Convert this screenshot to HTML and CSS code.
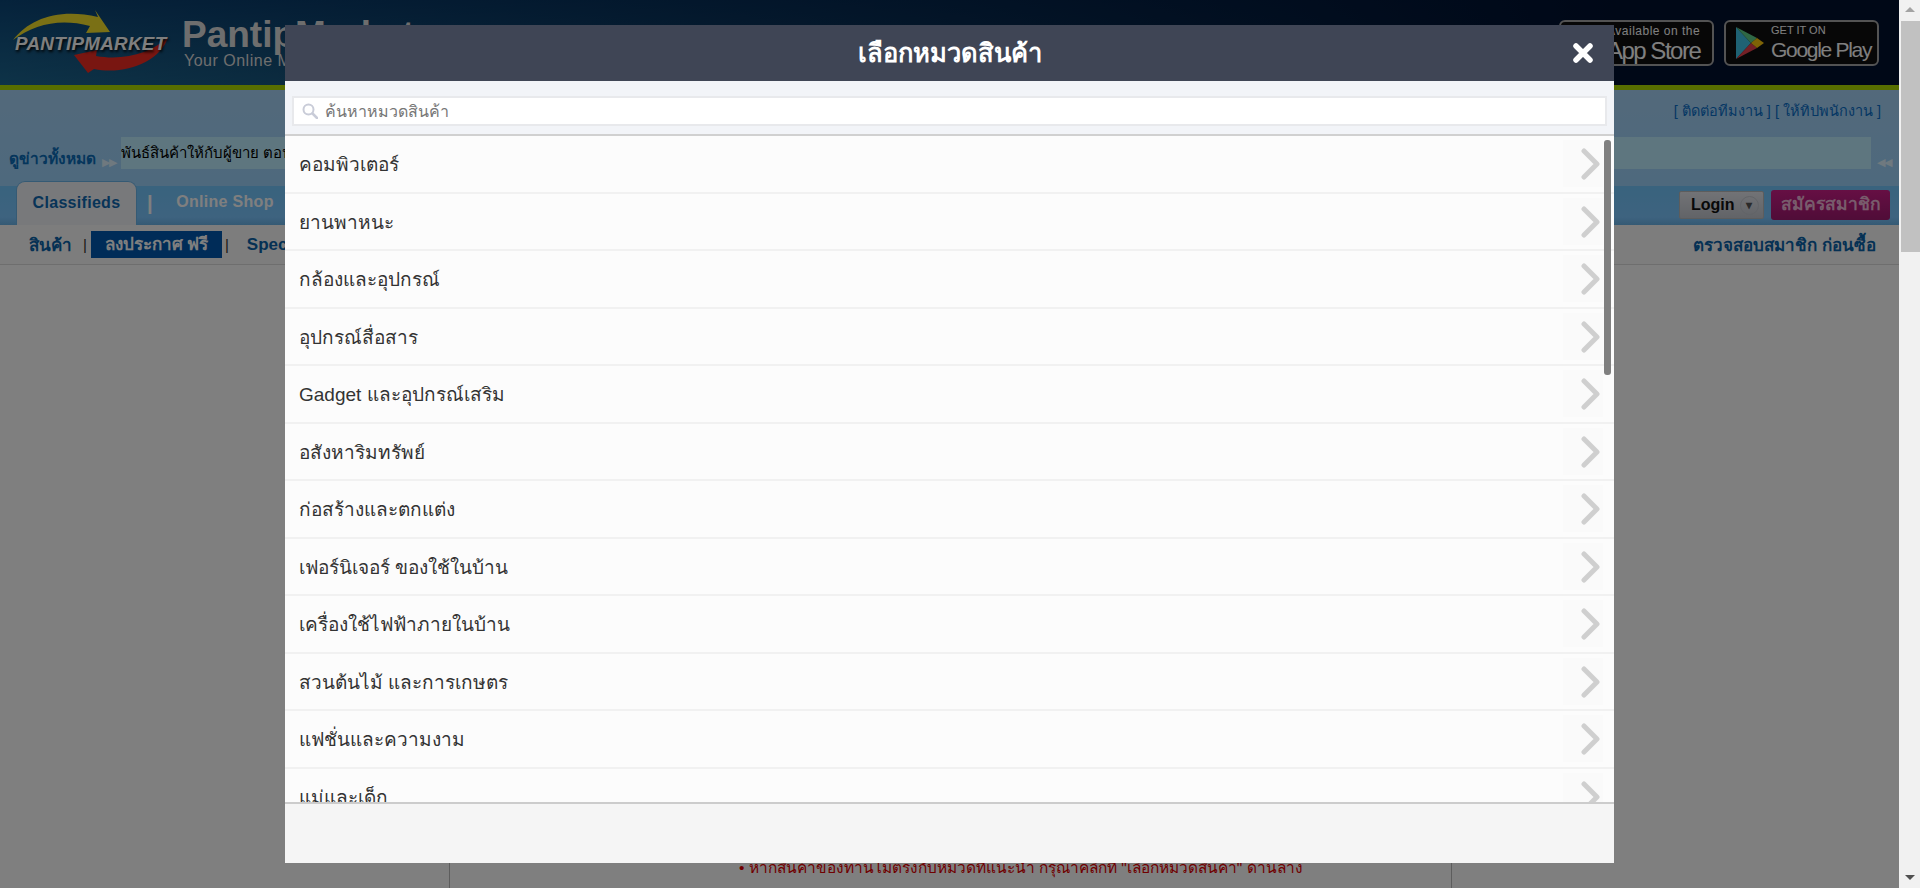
FILE: index.html
```html
<!DOCTYPE html>
<html lang="th">

<head>
    <meta charset="UTF-8">
    <meta name="viewport" content="width=device-width, initial-scale=1.0">
    <title>PantipMarket - เลือกหมวดสินค้า</title>
    <link rel="stylesheet" href="styles.css">
</head>

<body>

    <svg class="defs" width="0" height="0">
        <symbol id="chevron" viewBox="0 0 20 32">
            <path d="M3 3 L16 16 L3 29" fill="none" stroke="#cfcfcf" stroke-width="5" stroke-linecap="round" stroke-linejoin="round" />
        </symbol>
    </svg>

    <div class="page">
        <header class="top">
            <a class="logo">
                <svg class="logo-arrows" width="160" height="68" viewBox="0 0 160 68">
                    <path d="M1 31 C18 9 48 -1 86 8 L83 1 L98 23 L74 24 L78 17 C48 9 23 15 1 31 Z" fill="#f5e02a" />
                    <path d="M156 28 C148 54 112 66 82 60 L76 64 L62 46 L85 41 L84 47 C112 52 140 44 156 28 Z" fill="#f22c22" />
                </svg>
                <span class="logo-name">PANTIPMARKET</span>
            </a>
            <div class="brand">
                <div class="brand-name">PantipMarket</div>
                <div class="brand-sub">Your Online Marketplace</div>
            </div>
            <div class="badges">
                <div class="badge">
                    <span class="badge-small">Available on the</span>
                    <span class="badge-big">App Store</span>
                </div>
                <div class="badge badge-play">
                    <svg width="28" height="32" viewBox="0 0 28 32">
                        <path d="M0 0 L15 16 L0 32 Z" fill="#3fc4e8" />
                        <path d="M0 0 L21 11 L15 16 Z" fill="#5fd08a" />
                        <path d="M0 32 L21 21 L15 16 Z" fill="#e8414d" />
                        <path d="M21 11 L28 16 L21 21 L15 16 Z" fill="#fdc70c" />
                    </svg>
                    <div class="badge-text">
                        <span class="badge-small">GET IT ON</span>
                        <span class="badge-big">Google Play</span>
                    </div>
                </div>
            </div>
        </header>

        <div class="band">
            <div class="contact">[ ติดต่อทีมงาน ] [ ให้ทิปพนักงาน ]</div>
            <div class="news">
                <a class="news-all">ดูข่าวทั้งหมด</a>
                <span class="news-arrow">▶▶</span>
                <div class="ticker">พันธ์สินค้าให้กับผู้ขาย ตอนนี้</div>
                <span class="news-arrow news-arrow-end">◀◀</span>
            </div>
        </div>

        <nav class="tabs">
            <a class="tab tab-active">Classifieds</a>
            <span class="tab-sep">|</span>
            <a class="tab">Online Shop</a>
            <div class="account">
                <div class="login">Login <span class="login-caret">▾</span></div>
                <div class="register">สมัครสมาชิก</div>
            </div>
        </nav>

        <div class="subnav">
            <a>สินค้า</a>
            <span class="subnav-sep">|</span>
            <a class="subnav-post">ลงประกาศ ฟรี</a>
            <span class="subnav-sep">|</span>
            <a>Special</a>
            <a class="subnav-check">ตรวจสอบสมาชิก ก่อนซื้อ</a>
        </div>

        <main class="content">
            <div class="panel">
                <p class="hint">• หากสินค้าของท่านไม่ตรงกับหมวดที่แนะนำ กรุณาคลิกที่ "เลือกหมวดสินค้า" ด้านล่าง</p>
            </div>
        </main>

        <div class="overlay">
            <div class="modal">
                <div class="modal-head">
                    <h1>เลือกหมวดสินค้า</h1>
                    <svg class="modal-close" width="20" height="20" viewBox="0 0 20 20">
                        <path d="M3 3 L17 17 M17 3 L3 17" stroke="#fff" stroke-width="5.5" stroke-linecap="round" />
                    </svg>
                </div>
                <div class="modal-search">
                    <svg class="search-icon" width="16" height="16" viewBox="0 0 16 16">
                        <circle cx="6.5" cy="6.5" r="5" fill="none" stroke="#c9ccd8" stroke-width="2" />
                        <path d="M10.5 10.5 L15 15" stroke="#c9ccd8" stroke-width="2.5" stroke-linecap="round" />
                    </svg>
                    <input type="text" placeholder="ค้นหาหมวดสินค้า">
                </div>
                <div class="modal-list">
                    <div class="cat">คอมพิวเตอร์<span class="cat-go"><svg width="20" height="32"><use href="#chevron" /></svg></span></div>
                    <div class="cat">ยานพาหนะ<span class="cat-go"><svg width="20" height="32"><use href="#chevron" /></svg></span></div>
                    <div class="cat">กล้องและอุปกรณ์<span class="cat-go"><svg width="20" height="32"><use href="#chevron" /></svg></span></div>
                    <div class="cat">อุปกรณ์สื่อสาร<span class="cat-go"><svg width="20" height="32"><use href="#chevron" /></svg></span></div>
                    <div class="cat">Gadget และอุปกรณ์เสริม<span class="cat-go"><svg width="20" height="32"><use href="#chevron" /></svg></span></div>
                    <div class="cat">อสังหาริมทรัพย์<span class="cat-go"><svg width="20" height="32"><use href="#chevron" /></svg></span></div>
                    <div class="cat">ก่อสร้างและตกแต่ง<span class="cat-go"><svg width="20" height="32"><use href="#chevron" /></svg></span></div>
                    <div class="cat">เฟอร์นิเจอร์ ของใช้ในบ้าน<span class="cat-go"><svg width="20" height="32"><use href="#chevron" /></svg></span></div>
                    <div class="cat">เครื่องใช้ไฟฟ้าภายในบ้าน<span class="cat-go"><svg width="20" height="32"><use href="#chevron" /></svg></span></div>
                    <div class="cat">สวนต้นไม้ และการเกษตร<span class="cat-go"><svg width="20" height="32"><use href="#chevron" /></svg></span></div>
                    <div class="cat">แฟชั่นและความงาม<span class="cat-go"><svg width="20" height="32"><use href="#chevron" /></svg></span></div>
                    <div class="cat">แม่และเด็ก<span class="cat-go"><svg width="20" height="32"><use href="#chevron" /></svg></span></div>
                    <div class="list-thumb"></div>
                </div>
                <div class="modal-foot"></div>
            </div>
        </div>
    </div>

    <div class="scrollbar">
        <span class="scroll-up"></span>
        <div class="scroll-thumb"></div>
        <span class="scroll-down"></span>
    </div>

</body>

</html>
```

FILE: styles.css
```css
* {
    box-sizing: border-box;
}

body {
    margin: 0;
    height: 888px;
    overflow: hidden;
    display: flex;
    font-family: "Liberation Sans", Arial, sans-serif;
    background-color: #fff;
}

.defs {
    position: absolute;
}

.page {
    position: relative;
    flex: 1;
    min-width: 0;
    display: flex;
    flex-direction: column;
    overflow: hidden;
}

/* top header */
.top {
    height: 90px;
    flex: none;
    display: flex;
    align-items: flex-start;
    border-bottom: 5px solid #aedc00;
    background: linear-gradient(90deg, rgba(0, 16, 47, 0) 0, #00102f 85%), linear-gradient(180deg, #0b4577, #1c6690);
}

.logo {
    position: relative;
    width: 182px;
    height: 85px;
    flex: none;
}

.logo-arrows {
    position: absolute;
    left: 12px;
    top: 9px;
}

.logo-name {
    position: absolute;
    left: 15px;
    top: 33px;
    font-size: 18.8px;
    font-weight: bold;
    font-style: italic;
    color: #fff;
    letter-spacing: 0.3px;
    text-shadow: 1px 2px 3px #000;
}

.brand {
    color: #ddd;
    padding-top: 17px;
}

.brand-name {
    font-size: 37px;
    line-height: 35px;
    font-weight: bold;
}

.brand-sub {
    font-size: 16px;
    line-height: 17px;
    padding-left: 2px;
    letter-spacing: 0.5px;
}

.badges {
    margin-left: auto;
    margin-right: 20px;
    margin-top: 20px;
    display: flex;
    gap: 10px;
}

.badge {
    width: 155px;
    height: 46px;
    background-color: #0e0e0e;
    border: 2px solid #a6a6a6;
    border-radius: 6px;
    color: #fff;
    display: flex;
    flex-direction: column;
    padding: 3px 0 0 46px;
    white-space: nowrap;
}

.badge .badge-big {
    font-size: 24px;
    letter-spacing: -1.5px;
}

.badge-play {
    flex-direction: row;
    align-items: center;
    gap: 7px;
    padding: 0 0 0 10px;
}

.badge-play svg {
    flex: none;
}

.badge-text {
    display: flex;
    flex-direction: column;
}

.badge-small {
    font-size: 12px;
    line-height: 13px;
    letter-spacing: 0.5px;
}

.badge-play .badge-small {
    font-size: 11px;
    letter-spacing: 0;
}

.badge-play .badge-big {
    font-size: 21px;
    letter-spacing: -1.3px;
}

.badge-big {
    line-height: 25px;
}

/* contact and news */
.band {
    height: 96px;
    flex: none;
    background: linear-gradient(180deg, #a6d3f6, #9cd2fb);
}

.contact {
    text-align: right;
    padding: 12px 18px 0 0;
    font-size: 14.5px;
    line-height: 18px;
    color: #0a6ec8;
}

.news {
    display: flex;
    align-items: flex-end;
    margin-top: 17px;
    padding-left: 9px;
}

.news-all {
    width: 87px;
    font-size: 15.5px;
    line-height: 20px;
    font-weight: bold;
    color: #0a6cb8;
    white-space: nowrap;
}

.news-arrow {
    width: 25px;
    font-size: 11px;
    line-height: 14px;
    padding-left: 6px;
    color: #dff2ff;
    letter-spacing: -1px;
}

.ticker {
    flex: 1;
    height: 32px;
    overflow: hidden;
    background-color: #bcedff;
    padding-top: 6px;
    font-size: 15px;
    line-height: 20px;
    color: #000;
    white-space: nowrap;
}

.news-arrow-end {
    width: 28px;
}

/* tabs */
.tabs {
    height: 39px;
    flex: none;
    display: flex;
    align-items: flex-end;
    padding-left: 16px;
    background: linear-gradient(180deg, #72c6fc, #7cc6ff 80%, #6ab4e8);
    color: #fff;
}

.tab {
    width: 121px;
    height: 44px;
    margin-top: -5px;
    text-align: center;
    font-size: 16px;
    line-height: 41px;
    font-weight: bold;
    letter-spacing: 0.3px;
}

.tab-active {
    background-color: #f0f3f7;
    border: 1px solid #6ab4e8;
    border-bottom: none;
    border-radius: 9px 9px 0 0;
    color: #0f68b0;
}

.tab-sep {
    width: 35px;
    padding-left: 10px;
    font-size: 20px;
    line-height: 34px;
    font-weight: bold;
    align-self: flex-start;
}

.tab + .tab-sep + .tab {
    width: 112px;
    margin-left: -3px;
}

.account {
    margin-left: auto;
    margin-right: 9px;
    align-self: flex-start;
    margin-top: 4px;
    display: flex;
    gap: 7px;
}

.login {
    width: 85px;
    height: 28px;
    margin-top: 1px;
    padding-left: 11px;
    display: flex;
    align-items: center;
    gap: 5px;
    background: linear-gradient(180deg, #e4e6ec, #c4c8d0);
    border: 1px solid #bbb;
    border-radius: 2px;
    font-size: 16px;
    font-weight: bold;
    color: #111;
}

.login-caret {
    width: 19px;
    height: 19px;
    border: 1px solid #c4c8d0;
    border-radius: 50%;
    text-align: center;
    font-size: 12px;
    line-height: 17px;
    color: #555;
}

.register {
    width: 119px;
    height: 30px;
    background: linear-gradient(180deg, #cc1e88, #a01a70);
    border-radius: 3px;
    text-align: center;
    font-size: 17.5px;
    line-height: 29px;
    font-weight: bold;
    color: #f0b8d8;
    white-space: nowrap;
}

/* sub navigation */
.subnav {
    height: 40px;
    flex: none;
    display: flex;
    align-items: center;
    padding: 0 23px 0 29px;
    border-bottom: 1px solid #ddd;
    background-color: #fafafa;
    font-size: 17px;
    font-weight: bold;
    color: #0a62a8;
}

.subnav-sep {
    padding: 0 4px 0 11px;
    font-size: 15px;
    font-weight: normal;
    color: #333;
}

.subnav-post {
    width: 131px;
    height: 27px;
    background-color: #0058b0;
    text-align: center;
    line-height: 27px;
    color: #fff;
}

.subnav-post + .subnav-sep {
    padding: 0 18px 0 3px;
}

.subnav-check {
    margin-left: auto;
}

/* page body */
.content {
    flex: 1;
    padding-left: 449px;
}

.panel {
    width: 1003px;
    height: 100%;
    display: flex;
    align-items: flex-end;
    padding-left: 289px;
    border-left: 1px solid #bbb;
    border-right: 1px solid #bbb;
}

.hint {
    margin: 0 0 11px;
    font-size: 15.45px;
    line-height: 18px;
    color: #e00000;
    white-space: nowrap;
}

/* category dialog */
.overlay {
    position: absolute;
    inset: 0;
    background-color: rgba(0, 0, 0, 0.5);
}

.modal {
    width: 1329px;
    height: 838px;
    margin: 25px 0 0 285px;
    display: flex;
    flex-direction: column;
    background-color: #fff;
}

.modal-head {
    position: relative;
    height: 56px;
    flex: none;
    background-color: #3f4555;
    text-align: center;
}

.modal-head h1 {
    margin: 0;
    font-size: 25.5px;
    line-height: 57px;
    font-weight: bold;
    color: #fff;
}

.modal-close {
    position: absolute;
    right: 21px;
    top: 18px;
}

.modal-search {
    position: relative;
    height: 55px;
    flex: none;
    padding: 15px 7px 0;
    background-color: #f2f4f8;
    border-bottom: 2px solid #d0d0d0;
}

.modal-search input {
    display: block;
    width: 100%;
    height: 30px;
    padding: 2px 0 0 31px;
    border: 2px solid #e8e9ec;
    font-family: inherit;
    font-size: 16px;
    outline: none;
}

.modal-search input::placeholder {
    color: #777;
    opacity: 1;
}

.search-icon {
    position: absolute;
    left: 17px;
    top: 22px;
}

.modal-list {
    position: relative;
    flex: 1;
    min-height: 0;
    overflow: hidden;
    background-color: #fcfcfc;
}

.cat {
    position: relative;
    height: 57.5px;
    padding-left: 14px;
    border-bottom: 2px solid #f1f1f1;
    font-size: 19px;
    line-height: 58px;
    color: #333;
}

.cat-go {
    position: absolute;
    right: 11px;
    top: 4px;
    width: 40px;
    height: 47px;
    padding: 5px 0 0 18px;
    background-color: #fafafa;
}

.list-thumb {
    position: absolute;
    right: 3px;
    top: 4px;
    width: 7px;
    height: 235px;
    background-color: #808080;
    border-radius: 3px;
}

.modal-foot {
    height: 61px;
    flex: none;
    border-top: 2px solid #ccc;
    background-color: #f5f5f5;
}

/* page scrollbar */
.scrollbar {
    width: 21px;
    flex: none;
    display: flex;
    flex-direction: column;
    align-items: flex-end;
    background-color: #f1f1f1;
}

.scroll-up,
.scroll-down {
    width: 19px;
    height: 21px;
    position: relative;
}

.scroll-up::after,
.scroll-down::after {
    content: "";
    position: absolute;
    left: 4px;
    top: 7px;
    border-left: 5px solid transparent;
    border-right: 5px solid transparent;
    border-bottom: 5px solid #a3a3a3;
}

.scroll-down {
    margin-top: auto;
}

.scroll-down::after {
    top: 8px;
    border-bottom: none;
    border-top: 5px solid #505050;
}

.scroll-thumb {
    width: 19px;
    height: 231px;
    background-color: #c1c1c1;
}
```
